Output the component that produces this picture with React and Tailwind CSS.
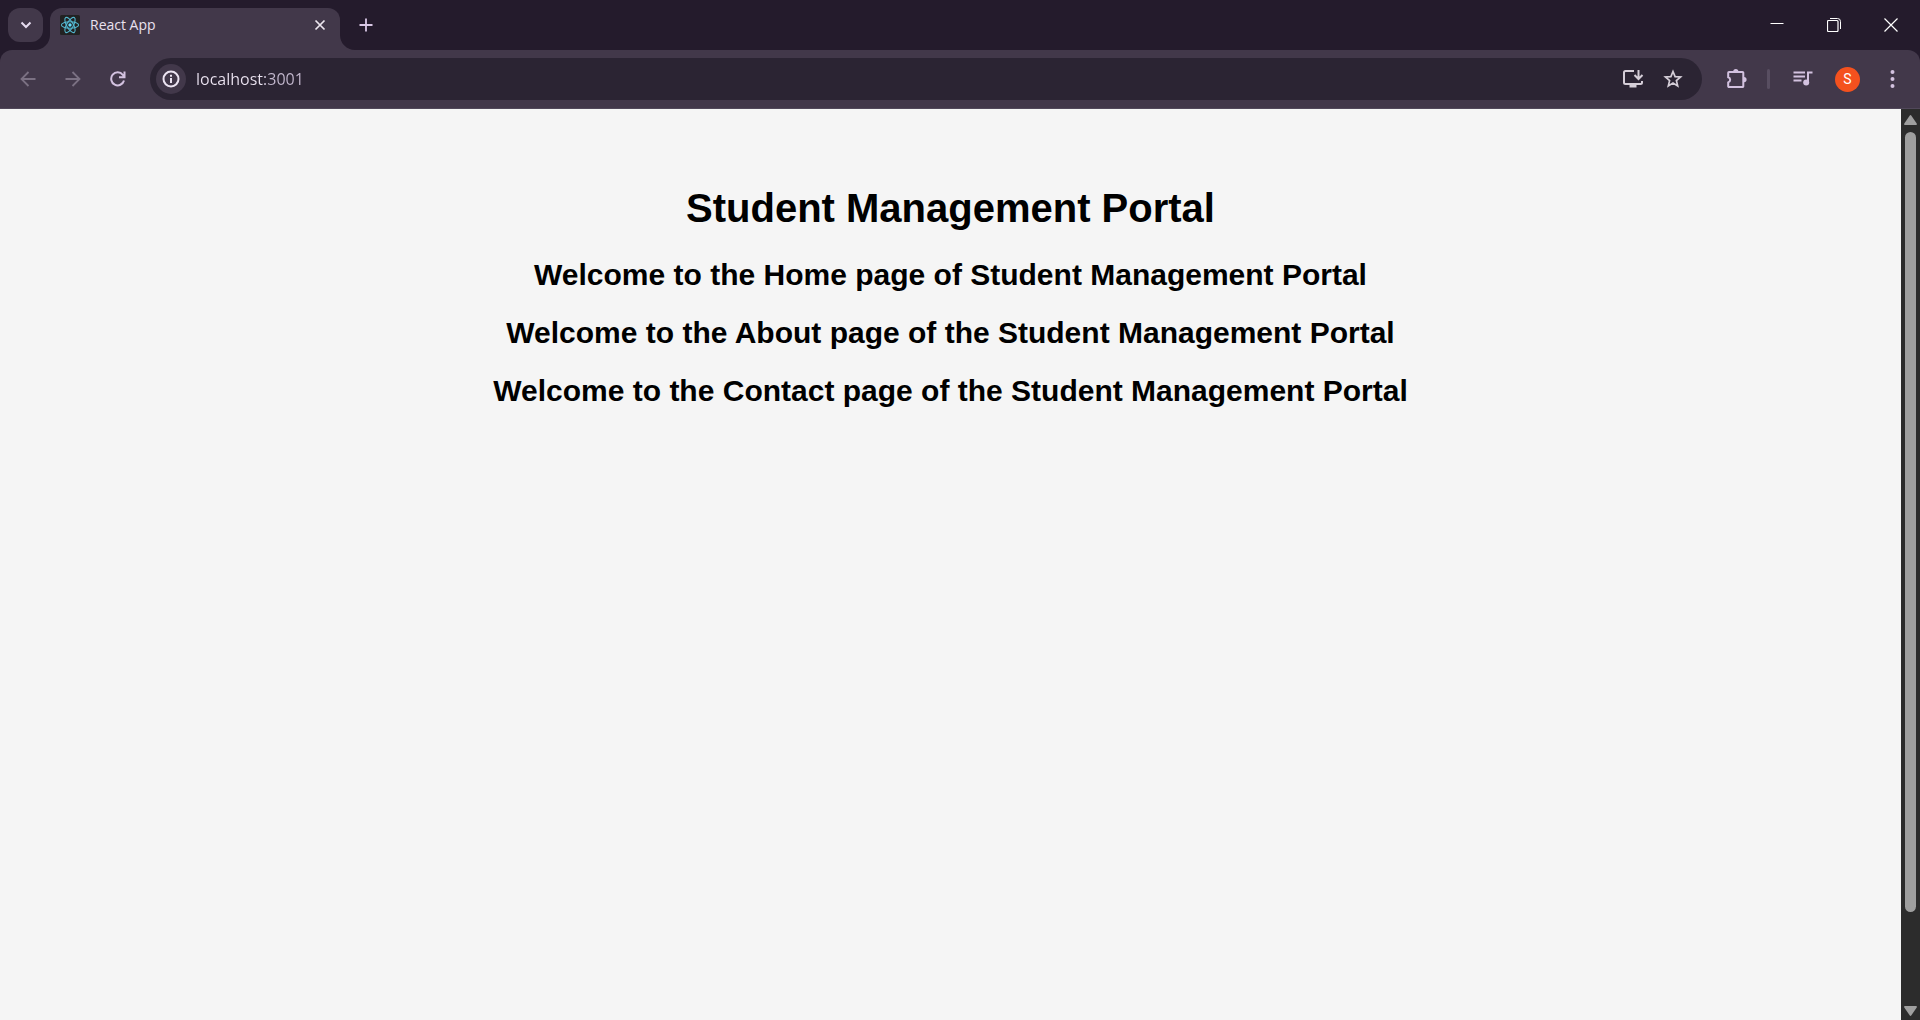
import React from "react";

const SANS = "font-['Open_Sans','Noto_Sans',sans-serif]";

function ReactLogo() {
  return (
    <svg viewBox="0 0 20 20" className="size-5 shrink-0" aria-hidden="true">
      <rect width="20" height="20" rx="1.5" fill="#222222" />
      <g fill="none" stroke="#53b8d0" strokeWidth="1.1">
        <ellipse cx="10" cy="10" rx="8.6" ry="3.3" />
        <ellipse cx="10" cy="10" rx="8.6" ry="3.3" transform="rotate(60 10 10)" />
        <ellipse cx="10" cy="10" rx="8.6" ry="3.3" transform="rotate(120 10 10)" />
      </g>
      <circle cx="10" cy="10" r="1.7" fill="#61dafb" />
    </svg>
  );
}

function Glyph({ children, className = "size-6", box = "0 0 24 24" }) {
  return (
    <svg viewBox={box} className={`${className} shrink-0`} fill="none" stroke="currentColor" strokeWidth="2" aria-hidden="true">
      {children}
    </svg>
  );
}

function TabFoot({ flip }) {
  return (
    <svg viewBox="0 0 15 15" className={flip ? "size-[15px] shrink-0 self-end -scale-x-100" : "size-[15px] shrink-0 self-end"} aria-hidden="true">
      <path d="M15 0v15H0C8.300 15 15 8.300 15 0z" fill="#42384a" />
    </svg>
  );
}

function TabStrip() {
  return (
    <header className="flex h-[50px] shrink-0 bg-[#241b2c]">
      <div className="w-[35px] shrink-0 pt-2 pl-2">
        <button aria-label="Search tabs" className="flex h-[34px] w-[35px] items-center justify-center rounded-xl bg-[#42384a] text-[#e6dcf0]">
          <Glyph className="size-4" box="0 0 16 16">
            <path d="M3.500 5.500 8 10l4.500-4.500" />
          </Glyph>
        </button>
      </div>
      <TabFoot />
      <div className="mt-2 flex w-[290px] items-center rounded-t-xl bg-[#42384a] pt-2 pr-3 pb-4 pl-[10px]">
        <ReactLogo />
        <span className={`ml-[10px] grow text-[14px] leading-5 text-[#e9e1ef] ${SANS}`}>React App</span>
        <button aria-label="Close tab" className="flex size-4 items-center justify-center text-[#ece6ef]">
          <Glyph className="size-4" box="0 0 16 16">
            <path d="m3.500 3.500 9 9m0-9-9 9" strokeWidth="1.700" />
          </Glyph>
        </button>
      </div>
      <TabFoot flip />
      <button aria-label="New tab" className="flex h-[50px] w-[22px] items-center justify-center text-[#d9c8e6]">
        <Glyph className="size-4" box="0 0 16 16">
          <path d="M8 1.500v13M1.500 8h13" strokeWidth="1.800" />
        </Glyph>
      </button>
      <div className="ml-auto flex text-white">
        <button aria-label="Minimize" className="flex h-[46px] w-[57px] items-center justify-center">
          <Glyph className="size-[14px]" box="0 0 14 14">
            <path d="M.5 7.500h13" strokeWidth="1" />
          </Glyph>
        </button>
        <button aria-label="Restore" className="flex h-[49px] w-[57px] items-center justify-center">
          <Glyph className="size-[14px]" box="0 0 14 14">
            <rect x=".5" y="2.500" width="10.500" height="11" rx="1" strokeWidth="1.200" />
            <path d="M3 .5h7.500a3 3 0 0 1 3 3V11" strokeWidth="1" />
          </Glyph>
        </button>
        <button aria-label="Close" className="flex h-[49px] w-[58px] items-center justify-center">
          <Glyph className="size-[14px]" box="0 0 14 14">
            <path d="m.5.5 13 13m0-13-13 13" strokeWidth="1.200" />
          </Glyph>
        </button>
      </div>
    </header>
  );
}

function Toolbar() {
  return (
    <div className="shrink-0 bg-[#241b2c]">
      <div className="flex h-[59px] items-center rounded-t-xl border-b border-[#51485a] bg-[#42384a] px-[15px] text-[#d3c2e0]">
        <button aria-label="Back" className="flex size-[25px] items-center justify-center text-[#7b7183]">
          <Glyph className="size-4" box="0 0 16 16">
            <path d="M15.500 8H2M8.500 1 1.500 8l7 7" strokeWidth="1.800" />
          </Glyph>
        </button>
        <button aria-label="Forward" className="ml-5 flex size-[25px] items-center justify-center text-[#7b7183]">
          <Glyph className="size-4" box="0 0 16 16">
            <path d="M.5 8H14M7.500 1l7 7-7 7" strokeWidth="1.800" />
          </Glyph>
        </button>
        <button aria-label="Reload" className="ml-5 flex size-[25px] items-center justify-center">
          <Glyph className="size-4" box="0 0 16 16">
            <path d="M14 9.500A6.500 6.500 0 1 1 12.800 3.800L14.200 6M14.500 .5v5.800H9" />
          </Glyph>
        </button>
        <div className="ml-5 flex h-[42px] grow items-center rounded-full bg-[#2b2433] pr-[17px] pl-1.5">
          <button aria-label="View site information" className="flex size-[30px] items-center justify-center rounded-full bg-[#42384a] text-[#ece4f2]">
            <Glyph className="size-[18px]" box="0 0 18 18">
              <circle cx="9" cy="9" r="7.500" />
              <path d="M9 8v5M9 4.800v2" />
            </Glyph>
          </button>
          <input
            aria-label="Address"
            defaultValue="localhost:3001"
            className="ml-[10px] grow bg-[linear-gradient(90deg,#ece4f2_69px,#c4b9cf_69px)] bg-clip-text font-['Open_Sans','Noto_Sans',sans-serif] text-[16px] leading-6 text-transparent caret-[#ece4f2] outline-none"
          />
          <button aria-label="Install app" className="flex size-[25px] items-center justify-center text-[#d5ced8]">
            <Glyph className="size-[22px]" box="0 0 22 22">
              <path d="M12 3H3.500A1.500 1.500 0 0 0 2 4.500v10A1.500 1.500 0 0 0 3.500 16h15a1.500 1.500 0 0 0 1.500-1.500V13" />
              <path d="M16.500 2v8.500M12.500 7l4 4 4-4" />
              <path d="M7.500 16h7v3.500h-7z" fill="currentColor" stroke="none" />
            </Glyph>
          </button>
          <button aria-label="Bookmark this tab" className="ml-[15px] flex size-[25px] items-center justify-center text-[#d5ced8]">
            <Glyph className="size-[20px]" box="0 0 20 20">
              <path d="m10 2.500 2.100 5.100 5.500.4-4.200 3.600 1.300 5.400-4.700-2.900L5.300 17l1.300-5.400L2.400 8l5.500-.4z" strokeWidth="1.700" />
            </Glyph>
          </button>
        </div>
        <button aria-label="Extensions" className="ml-[22px] flex size-[25px] items-center justify-center">
          <Glyph className="size-[22px]" box="0 0 22 22">
            <path d="M3 4h13.500a.8.8 0 0 1 .8.800v13.500a.8.8 0 0 1-.8.8H3a.8.8 0 0 1-.8-.8v-3.900a2.700 2.700 0 0 0 0-5.200V4.800A.8.8 0 0 1 3 4z" />
            <path d="M7.200 3.500a2.600 2.600 0 0 1 5.200 0zM18 9a2.600 2.600 0 0 1 0 5.200z" fill="currentColor" stroke="none" />
          </Glyph>
        </button>
        <span className="ml-[18px] h-5 w-[3px] rounded-full bg-[#584e61]" />
        <button aria-label="Control your media" className="ml-[20px] flex size-[25px] items-center justify-center">
          <Glyph className="size-[20px]" box="0 0 20 20">
            <path d="M.5 3.500h11.500M.5 7.500h11.500M.5 11.500h8" />
            <path d="M15 14V3.500h4.500" />
            <circle cx="13.200" cy="13.500" r="3" fill="currentColor" stroke="none" />
          </Glyph>
        </button>
        <button aria-label="Profile" className="ml-[20px] flex size-[25px] items-center justify-center rounded-full bg-[#f4511e] font-['Roboto',sans-serif] text-[14px] text-white">
          S
        </button>
        <button aria-label="Menu" className="ml-[20px] flex size-[25px] items-center justify-center">
          <Glyph className="size-5" box="0 0 20 20">
            <g fill="currentColor" stroke="none">
              <circle cx="9.500" cy="3" r="2" />
              <circle cx="9.500" cy="10" r="2" />
              <circle cx="9.500" cy="17" r="2" />
            </g>
          </Glyph>
        </button>
      </div>
    </div>
  );
}

const MESSAGES = [
  "Welcome to the Home page of Student Management Portal",
  "Welcome to the About page of the Student Management Portal",
  "Welcome to the Contact page of the Student Management Portal",
];

function Portal() {
  return (
    <main className="grow bg-[#f5f5f5] pt-[76px] text-center font-['Liberation_Sans',Arial,sans-serif] font-bold text-black">
      <h1 className="text-[40px] leading-[46px]">Student Management Portal</h1>
      <div className="mt-[27px] flex flex-col gap-6">
        {MESSAGES.map((message) => (
          <h2 key={message} className="text-[30px] leading-[34px]">{message}</h2>
        ))}
      </div>
    </main>
  );
}

function ScrollBar() {
  return (
    <div className="flex w-[19px] shrink-0 flex-col items-center bg-[#2c2c2c] pt-[6px] pb-1 text-[#9f9f9f]" aria-hidden="true">
      <svg viewBox="0 0 13 10" className="h-[10px] w-[13px] shrink-0" fill="currentColor">
        <path d="M5.600.7a1.100 1.100 0 0 1 1.800 0l5.300 7.800a1 1 0 0 1-.8 1.500H1.100a1 1 0 0 1-.8-1.500z" />
      </svg>
      <div className="mt-[7px] mb-[94px] w-[11px] grow rounded-full bg-[#9f9f9f]" />
      <svg viewBox="0 0 13 10" className="h-[10px] w-[13px] shrink-0 -scale-y-100" fill="currentColor">
        <path d="M5.600.7a1.100 1.100 0 0 1 1.800 0l5.300 7.800a1 1 0 0 1-.8 1.500H1.100a1 1 0 0 1-.8-1.500z" />
      </svg>
    </div>
  );
}

export default function App() {
  return (
    <div className="flex h-screen flex-col overflow-hidden">
      <TabStrip />
      <Toolbar />
      <div className="flex min-h-0 grow">
        <Portal />
        <ScrollBar />
      </div>
    </div>
  );
}
